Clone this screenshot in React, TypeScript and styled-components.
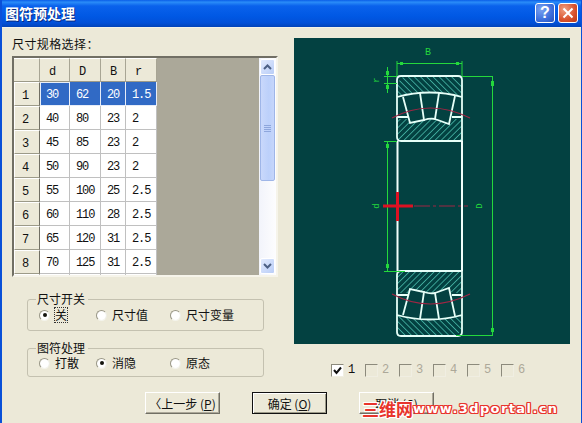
import React from "react";
import styled, { createGlobalStyle } from "styled-components";

const Global = createGlobalStyle`
  html, body { margin: 0; padding: 0; background: #ece9d8; }
  * { box-sizing: border-box; }
`;

const CJK = `"Noto Sans CJK SC", "Liberation Sans", sans-serif`;
const MONO = `"Liberation Mono", "DejaVu Sans Mono", monospace`;

const Win = styled.div`
  position: relative;
  width: 582px;
  height: 423px;
  background: #ece9d8;
  border-left: 2px solid #0a50d8;
  border-right: 1px solid #0a50d8;
  font: 12px ${CJK};
  color: #111;
  overflow: hidden;
  display: flex;
  flex-direction: column;
`;
const TitleBar = styled.div`
  height: 27px;
  margin: 0 -1px 0 -2px;
  flex: none;
  padding: 0 4px 0 5px;
  display: flex;
  align-items: center;
  justify-content: space-between;
  background: linear-gradient(180deg, #0a5ee8 0%, #2a8cf8 8%, #0a62ec 22%, #0058e4 60%, #0250d8 85%, #0243b8 100%);
`;
const TitleText = styled.div`
  color: #fff;
  font-weight: 700;
  font-size: 14px;
  line-height: 27px;
  text-shadow: 1px 1px 0 #0a2a80;
`;
const CaptionGroup = styled.div`
  display: flex;
  gap: 3px;
  padding-bottom: 1px;
`;
const CaptionBtn = styled.div<{ $close?: boolean }>`
  width: 20px;
  height: 20px;
  border: 1px solid #fff;
  border-radius: 3px;
  display: flex;
  align-items: center;
  justify-content: center;
  color: #fff;
  font: 700 16px "Liberation Sans", sans-serif;
  background: ${(p) =>
    p.$close
      ? "radial-gradient(circle at 30% 30%, #f0a080, #d8512c 60%, #b83a18)"
      : "radial-gradient(circle at 30% 30%, #7aa2f0, #3d6edc 60%, #2a52b8)"};
`;
const Client = styled.div`
  flex: 1;
  display: flex;
  flex-direction: column;
  padding: 8px 0 0 10px;
  border-top: 1px solid #f4f2e8;
`;
const TopRow = styled.div`
  display: flex;
  align-items: flex-start;
  gap: 16px;
`;
const LeftCol = styled.div`
  width: 266px;
  display: flex;
  flex-direction: column;
`;
const Heading = styled.div`
  height: 20px;
  line-height: 16px;
  letter-spacing: 0.4px;
`;
const GridFrame = styled.div`
  width: 266px;
  height: 221px;
  border: 2px solid;
  border-color: #716f64 #f6f4ea #f6f4ea #716f64;
  background: #aba899;
  display: flex;
  overflow: hidden;
`;
const GridArea = styled.div`
  flex: 1;
  overflow: hidden;
`;
const Table = styled.table`
  border-collapse: separate;
  border-spacing: 0;
  table-layout: fixed;
  width: 143px;
  font: 12px ${MONO};
  letter-spacing: -1.1px;
`;
const HeadCell = styled.th<{ $w: number }>`
  width: ${(p) => p.$w}px;
  height: 24px;
  padding: 3px 0 0 9px;
  text-align: left;
  background: #ece9d8;
  font: 400 12px ${MONO};
  letter-spacing: 0;
  border-right: 1px solid #a8a594;
  border-bottom: 1px solid #9c9a88;
  border-top: 1px solid #fff;
`;
const RowHead = styled.th`
  height: 24px;
  padding: 3px 0 0 7px;
  text-align: left;
  background: #ece9d8;
  font: 400 12px ${MONO};
  letter-spacing: 0;
  border-top: 1px solid #fff;
  border-left: 1px solid #fff;
  border-right: 1px solid #716f64;
  border-bottom: 1px solid #9c9a88;
`;
const Cell = styled.td<{ $sel?: boolean; $focus?: boolean }>`
  height: 24px;
  padding: 3px 0 0 6px;
  background: ${(p) => (p.$sel ? "#316ac5" : "#fff")};
  color: ${(p) => (p.$sel ? "#fff" : "#111")};
  border-right: 1px solid ${(p) => (p.$sel ? "#e6ecf8" : "#c0c0c0")};
  border-bottom: 1px solid ${(p) => (p.$sel ? "#e6ecf8" : "#c0c0c0")};
  ${(p) => (p.$focus ? "outline: 1px solid #e8eef8; outline-offset: -1px;" : "")}
`;
const Scrollbar = styled.div`
  width: 17px;
  flex: none;
  background: linear-gradient(90deg, #f2f4fb, #fdfdfe);
  display: flex;
  flex-direction: column;
  padding: 1px;
`;
const ScrollBtn = styled.div`
  width: 15px;
  height: 16px;
  flex: none;
  border: 1px solid #fff;
  border-radius: 2px;
  background: linear-gradient(135deg, #e2ebfe, #b9cdf7);
  display: flex;
  align-items: center;
  justify-content: center;
`;
const Thumb = styled.div`
  width: 15px;
  height: 106px;
  flex: none;
  border: 1px solid #9fb6e8;
  border-radius: 2px;
  background: linear-gradient(90deg, #c9d8fb, #bcd0fa 60%, #c6d6fb);
  display: flex;
  align-items: center;
  justify-content: center;
`;
const Track = styled.div`
  flex: 1;
`;
const Group = styled.fieldset<{ $h: number; $mt: number }>`
  margin: ${(p) => p.$mt}px 0 0 15px;
  padding: 0 0 0 11px;
  width: 237px;
  height: ${(p) => p.$h}px;
  border: 1px solid #c4c1b0;
  border-radius: 3px;
  min-width: 0;
`;
const Legend = styled.legend`
  margin-left: -3px;
  padding: 0 3px 0 1px;
  font-size: 12px;
  line-height: 14px;
`;
const RadioRow = styled.div<{ $mt: number }>`
  display: grid;
  grid-template-columns: 57px 74px auto;
  align-items: center;
  height: 16px;
  margin-top: ${(p) => p.$mt}px;
`;
const RadioOpt = styled.div`
  display: flex;
  align-items: center;
  gap: 5px;
`;
const RadioDot = styled.span<{ $on?: boolean }>`
  width: 11px;
  height: 11px;
  border-radius: 50%;
  flex: none;
  border: 1px solid #c8c6b8;
  border-color: #9a9888 #eeeee6 #f4f4ec #9a9888;
  background: radial-gradient(circle, #fff 60%, #e8e6da);
  display: flex;
  align-items: center;
  justify-content: center;
  &::after {
    content: "";
    width: 4px;
    height: 4px;
    border-radius: 50%;
    background: ${(p) => (p.$on ? "#15150f" : "transparent")};
  }
`;
const RadioLabel = styled.span<{ $focus?: boolean }>`
  line-height: 14px;
  outline: ${(p) => (p.$focus ? "1px dotted #333" : "none")};
`;
const RightCol = styled.div`
  padding-top: 2px;
  display: flex;
  flex-direction: column;
`;
const Preview = styled.svg`
  display: block;
  width: 276px;
  height: 306px;
  background: #034141;
`;
const Checks = styled.div`
  margin: 19px 0 0 37px;
  display: flex;
`;
const CheckItem = styled.div<{ $on?: boolean }>`
  width: 34px;
  display: flex;
  align-items: center;
  gap: 4px;
  font: 12px ${MONO};
  color: ${(p) => (p.$on ? "#111" : "#aca899")};
`;
const CheckBox = styled.span<{ $on?: boolean }>`
  width: 13px;
  height: 13px;
  flex: none;
  border: 1px solid;
  border-color: #8c8a7c #f0eee2 #f0eee2 #8c8a7c;
  background: ${(p) => (p.$on ? "#fff" : "#ece9d8")};
  display: flex;
  align-items: center;
  justify-content: center;
`;
const Footer = styled.div`
  display: flex;
  gap: 32px;
  margin: 15px 0 0 133px;
`;
const Btn = styled.div<{ $def?: boolean }>`
  width: 75px;
  height: 22px;
  display: flex;
  align-items: center;
  justify-content: center;
  background: #ece9d8;
  border: 1px solid;
  border-color: ${(p) => (p.$def ? "#111" : "#fff #716f64 #716f64 #fff")};
  box-shadow: ${(p) => (p.$def ? "inset 1px 1px 0 #fff, inset -1px -1px 0 #9c9a88" : "inset -1px -1px 0 #aca899")};
  font-size: 12px;
  u { text-underline-offset: 1px; }
`;
const Watermark = styled.div`
  position: absolute;
  left: 360px;
  top: 396px;
  display: flex;
  align-items: center;
  white-space: nowrap;
  pointer-events: none;
`;
const WmCn = styled.span`
  font: 700 17px ${CJK};
  color: #e8342c;
  text-shadow: 1px 0 0 #fff, -1px 0 0 #fff, 0 1px 0 #fff, 0 -1px 0 #fff, 1px 1px 0 #fff, -1px -1px 0 #fff, 1px -1px 0 #fff, -1px 1px 0 #fff;
`;
const WmEn = styled.span`
  font: 700 13px "DejaVu Sans", sans-serif;
  letter-spacing: 1.4px;
  color: #fff;
  text-shadow: 1px 0 0 #e8342c, -1px 0 0 #e8342c, 0 1px 0 #e8342c, 0 -1px 0 #e8342c, 1px 1px 0 #e8342c, -1px -1px 0 #e8342c, 1px -1px 0 #e8342c, -1px 1px 0 #e8342c;
`;

const rows = [
  ["30", "62", "20", "1.5"],
  ["40", "80", "23", "2"],
  ["45", "85", "23", "2"],
  ["50", "90", "23", "2"],
  ["55", "100", "25", "2.5"],
  ["60", "110", "28", "2.5"],
  ["65", "120", "31", "2.5"],
  ["70", "125", "31", "2.5"],
  ["75", "130", "31", "2.5"],
];

const Half = ({ mirror }: { mirror?: boolean }) => (
  <g transform={mirror ? "translate(0 336) scale(1 -1)" : undefined} fill="none">
    <path d="M110 38H162L168 45V59Q136 50 103 59V45Z" fill={`url(#${mirror ? "hatchF" : "hatchB"})`} />
    <path d="M103 81H114L116 85L130 82Q136 80 141 81L155 86L158 81H168V99Q168 103 164 103H107Q103 103 103 99Z" fill={`url(#${mirror ? "hatchB" : "hatchF"})`} />
    <g stroke="#e6fff8" strokeWidth="1.8">
      <path d="M107 38H164Q168 38 168 42V103H107Q103 103 103 99V42Q103 38 107 38Z" />
      <path d="M103 59Q136 50 168 59" />
      <path d="M109 59L116 85L130 82L126 55M145 55L141 81L155 86L161 58" />
      <path d="M130 82Q136 80 141 81M103 79H114M158 79H168" />
    </g>
    <path d="M98 80Q136 60 176 80" stroke="#a02644" strokeWidth="1.2" />
  </g>
);

export default function App() {
  return (
    <Win>
      <Global />
      <TitleBar>
        <TitleText>图符预处理</TitleText>
        <CaptionGroup>
          <CaptionBtn>?</CaptionBtn>
          <CaptionBtn $close>
            <svg width="12" height="12" viewBox="0 0 12 12">
              <path d="M1.5 1.5L10.5 10.5M10.5 1.5L1.5 10.5" stroke="#fff" strokeWidth="2" />
            </svg>
          </CaptionBtn>
        </CaptionGroup>
      </TitleBar>
      <Client>
        <TopRow>
          <LeftCol>
            <Heading>尺寸规格选择：</Heading>
            <GridFrame>
              <GridArea>
                <Table>
                  <thead>
                    <tr>
                      <HeadCell $w={26} />
                      <HeadCell $w={30}>d</HeadCell>
                      <HeadCell $w={31}>D</HeadCell>
                      <HeadCell $w={25}>B</HeadCell>
                      <HeadCell $w={31}>r</HeadCell>
                    </tr>
                  </thead>
                  <tbody>
                    {rows.map((r, i) => (
                      <tr key={i}>
                        <RowHead>{i + 1}</RowHead>
                        {r.map((v, j) => (
                          <Cell key={j} $sel={i === 0} $focus={i === 0 && j === 0}>
                            {v}
                          </Cell>
                        ))}
                      </tr>
                    ))}
                  </tbody>
                </Table>
              </GridArea>
              <Scrollbar>
                <ScrollBtn>
                  <svg width="9" height="6" viewBox="0 0 9 6">
                    <path d="M1 5L4.5 1.5L8 5" fill="none" stroke="#4d6185" strokeWidth="2" />
                  </svg>
                </ScrollBtn>
                <Thumb>
                  <svg width="7" height="7" viewBox="0 0 7 7">
                    <path d="M0 .5H7M0 2.5H7M0 4.5H7M0 6.5H7" stroke="#8ea6dc" />
                  </svg>
                </Thumb>
                <Track />
                <ScrollBtn>
                  <svg width="9" height="6" viewBox="0 0 9 6">
                    <path d="M1 1L4.5 4.5L8 1" fill="none" stroke="#4d6185" strokeWidth="2" />
                  </svg>
                </ScrollBtn>
              </Scrollbar>
            </GridFrame>
            <Group $h={39} $mt={15}>
              <Legend>尺寸开关</Legend>
              <RadioRow $mt={1}>
                <RadioOpt><RadioDot $on /><RadioLabel $focus>关</RadioLabel></RadioOpt>
                <RadioOpt><RadioDot /><RadioLabel>尺寸值</RadioLabel></RadioOpt>
                <RadioOpt><RadioDot /><RadioLabel>尺寸变量</RadioLabel></RadioOpt>
              </RadioRow>
            </Group>
            <Group $h={36} $mt={10}>
              <Legend>图符处理</Legend>
              <RadioRow $mt={0}>
                <RadioOpt><RadioDot /><RadioLabel>打散</RadioLabel></RadioOpt>
                <RadioOpt><RadioDot $on /><RadioLabel>消隐</RadioLabel></RadioOpt>
                <RadioOpt><RadioDot /><RadioLabel>原态</RadioLabel></RadioOpt>
              </RadioRow>
            </Group>
          </LeftCol>
          <RightCol>
            <Preview viewBox="0 0 276 306">
              <defs>
                <pattern id="hatchB" width="4.4" height="4.4" patternUnits="userSpaceOnUse" patternTransform="rotate(-45)">
                  <path d="M0 0V4.4" stroke="#66ecd6" strokeWidth="1.1" />
                </pattern>
                <pattern id="hatchF" width="4.4" height="4.4" patternUnits="userSpaceOnUse" patternTransform="rotate(45)">
                  <path d="M0 0V4.4" stroke="#66ecd6" strokeWidth="1.1" />
                </pattern>
              </defs>
              <Half />
              <Half mirror />
              <path d="M103.5 103V233M168 103V233" stroke="#f2fffb" strokeWidth="2" />
              <path d="M120 168H174" stroke="#a02644" strokeDasharray="16 3 3 3" />
              <g stroke="#24d83c" fill="none" strokeWidth="1">
                <path d="M103 23V38M168 23V38M103 25.5H168" />
                <path d="M90 38.5H103M90 45.5H103M93.5 29V55" />
                <path d="M90 103.5H103M93.5 103V233M90 233.5H111" />
                <path d="M168 38.5H199M198.5 39V297M162 297.5H199" />
              </g>
              <g fill="#24d83c">
                <rect x="106" y="24" width="3" height="3" />
                <rect x="162" y="24" width="3" height="3" />
                <rect x="92" y="33" width="3" height="4" />
                <rect x="92" y="47" width="3" height="4" />
                <rect x="92" y="106" width="3" height="4" />
                <rect x="92" y="226" width="3" height="4" />
                <rect x="197" y="43" width="3" height="5" />
                <rect x="197" y="290" width="3" height="4" />
              </g>
              <g fill="#24d83c" fontFamily="Liberation Mono, monospace" fontSize="9" textAnchor="middle">
                <text x="134" y="17" fontSize="10">B</text>
                <text transform="translate(85 42) rotate(-90)" y="0">r</text>
                <text transform="translate(85 168) rotate(-90)" y="0">d</text>
                <text transform="translate(188 168) rotate(-90)" y="0">D</text>
              </g>
              <path d="M89 168H119M103.5 154V183" stroke="#dd1122" strokeWidth="3" />
            </Preview>
            <Checks>
              {[1, 2, 3, 4, 5, 6].map((n) => (
                <CheckItem key={n} $on={n === 1}>
                  <CheckBox $on={n === 1}>
                    {n === 1 && (
                      <svg width="9" height="9" viewBox="0 0 9 9">
                        <path d="M1 4L3.5 7L8 1.5" fill="none" stroke="#111" strokeWidth="2" />
                      </svg>
                    )}
                  </CheckBox>
                  {n}
                </CheckItem>
              ))}
            </Checks>
          </RightCol>
        </TopRow>
        <Footer>
          <Btn>〈上一步 (<u>P</u>)</Btn>
          <Btn $def>确定 (<u>O</u>)</Btn>
          <Btn>取消 (<u>C</u>)</Btn>
        </Footer>
      </Client>
      <Watermark>
        <WmCn>三维网</WmCn>
        <WmEn>www.3dportal.cn</WmEn>
      </Watermark>
    </Win>
  );
}
